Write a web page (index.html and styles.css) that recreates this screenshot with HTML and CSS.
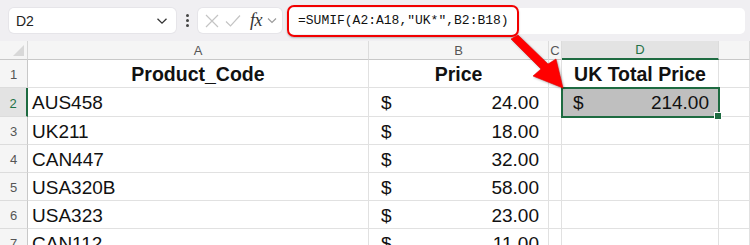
FILE: index.html
```html
<!DOCTYPE html>
<html lang="en">
<head>
  <meta charset="UTF-8">
  <title>SUMIF example</title>
  <link rel="stylesheet" href="styles.css">
</head>
<body>
  <div class="app">
    <div class="toolbar">
      <div class="namebox">
        <span>D2</span>
        <svg class="chev" width="12" height="8" viewBox="0 0 12 8"><path d="M1.5 1.8 L6 6.2 L10.5 1.8" fill="none" stroke="#333" stroke-width="1.3"/></svg>
      </div>
      <div class="kebab"><i></i><i></i><i></i></div>
      <div class="fxbox">
        <svg width="14" height="14" viewBox="0 0 14 14"><path d="M1 1 L13 13 M13 1 L1 13" stroke="#c4c4c4" stroke-width="1.2"/></svg>
        <svg width="16" height="14" viewBox="0 0 16 14"><path d="M1 7.5 L5.5 12 L15 1.5" fill="none" stroke="#c4c4c4" stroke-width="1.2"/></svg>
        <span class="fx">fx</span>
        <svg width="10" height="7" viewBox="0 0 10 7"><path d="M1 1.5 L5 5.5 L9 1.5" fill="none" stroke="#9a9a9a" stroke-width="1.1"/></svg>
      </div>
      <div class="formula">
        <div class="formula-hl">=SUMIF(A2:A18,"UK*",B2:B18)</div>
      </div>
    </div>

    <div class="sheet">
      <div class="corner"></div>
      <div class="colhead">A</div>
      <div class="colhead">B</div>
      <div class="colhead">C</div>
      <div class="colhead sel">D</div>
      <div class="colhead"></div>

      <div class="rowhead">1</div>
      <div class="cell title">Product_Code</div>
      <div class="cell title">Price</div>
      <div class="cell"></div>
      <div class="cell title">UK Total Price</div>
      <div class="cell"></div>

      <div class="rowhead sel">2</div>
      <div class="cell">AUS458</div>
      <div class="cell money"><span>$</span><span>24.00</span></div>
      <div class="cell"></div>
      <div class="cell money active"><span>$</span><span>214.00</span></div>
      <div class="cell"></div>

      <div class="rowhead">3</div>
      <div class="cell">UK211</div>
      <div class="cell money"><span>$</span><span>18.00</span></div>
      <div class="cell"></div>
      <div class="cell"></div>
      <div class="cell"></div>

      <div class="rowhead">4</div>
      <div class="cell">CAN447</div>
      <div class="cell money"><span>$</span><span>32.00</span></div>
      <div class="cell"></div>
      <div class="cell"></div>
      <div class="cell"></div>

      <div class="rowhead">5</div>
      <div class="cell">USA320B</div>
      <div class="cell money"><span>$</span><span>58.00</span></div>
      <div class="cell"></div>
      <div class="cell"></div>
      <div class="cell"></div>

      <div class="rowhead">6</div>
      <div class="cell">USA323</div>
      <div class="cell money"><span>$</span><span>23.00</span></div>
      <div class="cell"></div>
      <div class="cell"></div>
      <div class="cell"></div>

      <div class="rowhead">7</div>
      <div class="cell">CAN112</div>
      <div class="cell money"><span>$</span><span>11.00</span></div>
      <div class="cell"></div>
      <div class="cell"></div>
      <div class="cell"></div>
    </div>

    <!-- callout arrow from the formula to the result cell -->
    <svg class="arrow" width="750" height="245" viewBox="0 0 750 245">
      <polygon points="511,39 518,35 548,64 556,59 563,88 533,76 541,69" fill="#ff0000" stroke="#e00000" stroke-width="0.6" stroke-linejoin="round"/>
    </svg>
  </div>
</body>
</html>
```

FILE: styles.css
```css
body {
  margin: 0;
  font-family: "Liberation Sans", Arial, sans-serif;
  background: #fff;
  overflow: hidden;
}

.app {
  position: relative;
  width: 750px;
  height: 245px;
  overflow: hidden;
}

/* formula toolbar */
.toolbar {
  height: 41px;
  background: #f0eff2;
  display: flex;
  align-items: center;
  padding-left: 9px;
  box-sizing: border-box;
}

.namebox {
  width: 167px;
  height: 25px;
  background: #fff;
  border-radius: 5px;
  box-shadow: 0 0 0 1px #e6e5e9;
  display: flex;
  align-items: center;
  justify-content: space-between;
  padding: 0 8px 0 7px;
  box-sizing: border-box;
  font-size: 14px;
  color: #222;
}

.kebab {
  width: 22px;
  display: flex;
  flex-direction: column;
  align-items: center;
  gap: 2px;
}
.kebab i {
  width: 3px;
  height: 3px;
  background: #444;
  border-radius: 50%;
}

.fxbox {
  width: 84px;
  height: 25px;
  background: #fff;
  border-radius: 5px;
  box-shadow: 0 0 0 1px #e6e5e9;
  display: flex;
  align-items: center;
  gap: 6px;
  padding-left: 7px;
  box-sizing: border-box;
}
.fx {
  font-family: "Liberation Serif", "Times New Roman", serif;
  font-style: italic;
  font-size: 18px;
  color: #333;
  margin: 0 -1px 0 3px;
  letter-spacing: -0.5px;
}

.formula {
  flex: 1;
  height: 26px;
  margin: 0 5px 0 5px;
  background: #fff;
  border-radius: 5px;
  display: flex;
  align-items: center;
}
.formula-hl {
  height: 32px;
  width: 232px;
  box-sizing: border-box;
  border: 2px solid #f20000;
  border-radius: 7px;
  display: flex;
  align-items: center;
  padding-left: 9px;
  font-family: "Liberation Mono", "Courier New", monospace;
  font-size: 13px;
  color: #111;
  box-shadow: 0 1px 2px rgba(0, 0, 0, 0.25);
}

/* sheet grid */
.sheet {
  display: grid;
  grid-template-columns: 28px 341px 180px 13px 157px 1fr;
  grid-template-rows: 19px 28px 29px 28px 28px 28px 28px 28px;
}

.corner {
  position: relative;
  background: #f5f5f5;
  border-right: 1px solid #d6d6d6;
  border-bottom: 1px solid #c8c8c8;
}
.corner::after {
  content: "";
  position: absolute;
  right: 3px;
  bottom: 3px;
  width: 11px;
  height: 11px;
  background: #d8d8d8;
  clip-path: polygon(100% 0, 100% 100%, 0 100%);
}

.colhead {
  background: #f5f5f5;
  border-right: 1px solid #dcdcdc;
  border-bottom: 1px solid #c8c8c8;
  font-size: 13px;
  color: #555;
  display: flex;
  align-items: center;
  justify-content: center;
}
.colhead.sel {
  background: #e3e3e3;
  color: #1f7247;
  border-bottom: 2px solid #1e6b41;
}

.rowhead {
  background: #f5f5f5;
  border-right: 1px solid #c8c8c8;
  border-bottom: 1px solid #dcdcdc;
  font-size: 13px;
  color: #555;
  display: flex;
  align-items: center;
  justify-content: center;
  padding-top: 2px;
}
.rowhead.sel {
  background: #e3e3e3;
  color: #1f7247;
  border-right: 2px solid #1e6b41;
}

.cell {
  border-right: 1px solid #e1e1e1;
  border-bottom: 1px solid #e1e1e1;
  font-size: 19px;
  color: #111;
  display: flex;
  align-items: center;
  padding: 2px 0 0 4px;
  white-space: nowrap;
  overflow: hidden;
}
.cell.title {
  font-weight: bold;
  font-size: 19.5px;
  justify-content: center;
  padding-left: 0;
}
.cell.money {
  justify-content: space-between;
  padding: 2px 9px 0 12px;
}
.cell.active {
  position: relative;
  overflow: visible;
  background: #bfbfbf;
  padding-left: 11px;
  outline: 2px solid #1e6b41;
  outline-offset: -1px;
}
.cell.active::after {
  content: "";
  position: absolute;
  right: -4px;
  bottom: -4px;
  width: 6px;
  height: 6px;
  background: #1e6b41;
  border: 1px solid #fff;
}

.arrow {
  position: absolute;
  left: 0;
  top: 0;
  pointer-events: none;
  filter: drop-shadow(1px 1px 1px rgba(0, 0, 0, 0.3));
}
```
